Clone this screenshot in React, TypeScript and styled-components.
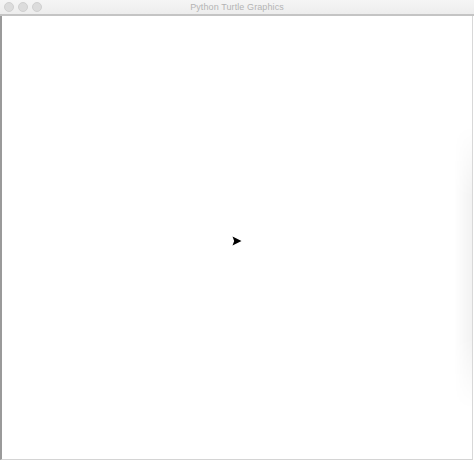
import React from 'react';
import styled, { createGlobalStyle } from 'styled-components';

const GlobalStyle = createGlobalStyle`
  html, body {
    margin: 0;
    padding: 0;
    background: #ffffff;
  }
  body {
    font-family: "Liberation Sans", Arial, sans-serif;
  }
`;

const Window = styled.div`
  width: 474px;
  height: 462px;
  display: flex;
  flex-direction: column;
  background: #ffffff;
  overflow: hidden;
`;

const TitleBar = styled.div`
  height: 14px;
  display: flex;
  align-items: center;
  position: relative;
  background: linear-gradient(to bottom, #f5f5f5, #ededed);
  border-bottom: 2px solid #c4c4c4;
`;

const Lights = styled.div`
  display: flex;
  gap: 4px;
  padding-left: 4px;
`;

const Light = styled.span`
  width: 8px;
  height: 8px;
  border-radius: 50%;
  background: #dcdcdc;
  border: 0.5px solid #d0d0d0;
`;

const Title = styled.div`
  position: absolute;
  left: 0;
  right: 0;
  text-align: center;
  font-size: 9px;
  color: #b4b4b4;
  letter-spacing: 0.1px;
`;

const Body = styled.div`
  flex: 1;
  display: flex;
  padding-bottom: 2px;
`;

const Canvas = styled.div`
  width: 470px;
  display: flex;
  align-items: center;
  justify-content: center;
  position: relative;
  background: #ffffff;
  border-left: 2px solid #9a9a9a;
  border-right: 1px solid #d8d8d8;
  border-bottom: 1px solid #d4d4d4;
`;

const Shadow = styled.div`
  position: absolute;
  right: 0;
  top: 110px;
  bottom: 50px;
  width: 18px;
  background: linear-gradient(to right, rgba(0, 0, 0, 0), rgba(0, 0, 0, 0.05));
  mask-image: linear-gradient(to bottom, transparent, #000 25%, #000 75%, transparent);
`;

const Turtle = styled.svg`
  width: 10px;
  height: 10px;
  margin-top: 6px;
  margin-left: 0px;
`;

export default function App() {
  return (
    <>
      <GlobalStyle />
      <Window>
        <TitleBar>
          <Lights>
            <Light />
            <Light />
            <Light />
          </Lights>
          <Title>Python Turtle Graphics</Title>
        </TitleBar>
        <Body>
          <Canvas>
            <Shadow />
            <Turtle viewBox="-5 -5 10 10">
              <polygon points="4.5,0 -4.5,-4.5 -2.8,0 -4.5,4.5" fill="#000" />
            </Turtle>
          </Canvas>
        </Body>
      </Window>
    </>
  );
}
